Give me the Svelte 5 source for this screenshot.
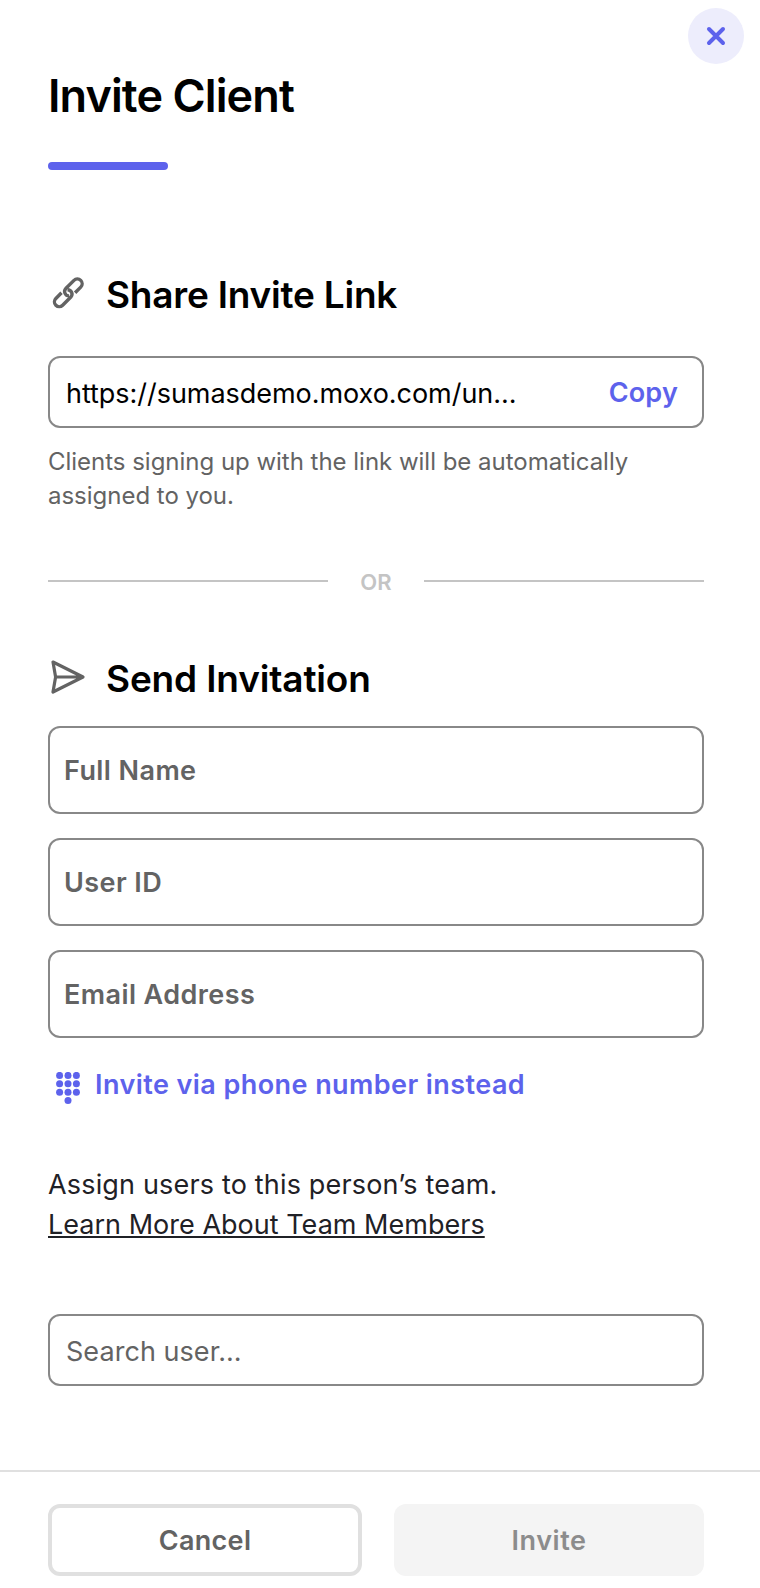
<script lang="ts">
  const inviteLink = 'https://sumasdemo.moxo.com/un...';

  const fields = [
    { id: 'name', label: 'Full Name' },
    { id: 'user', label: 'User ID' },
    { id: 'email', label: 'Email Address' },
  ];

  // keypad dots: 3x3 plus one below the middle column
  const dots = [
    [3.6, 3.4], [12, 3.4], [20.4, 3.4],
    [3.6, 11.8], [12, 11.8], [20.4, 11.8],
    [3.6, 20.2], [12, 20.2], [20.4, 20.2],
    [12, 28.6],
  ];
</script>

<div class="panel">
  <button class="close" aria-label="Close">
    <svg width="20" height="20" viewBox="0 0 20 20">
      <path d="M3 3 17 17M17 3 3 17" />
    </svg>
  </button>

  <header>
    <h1>Invite Client</h1>
    <div class="accent"></div>
  </header>

  <section class="share">
    <div class="heading">
      <svg class="icon link-icon" width="40" height="40" viewBox="0 0 40 40">
        <g transform="translate(20.3 21.8) rotate(-45)">
          <path d="M4.8 4.8H12.8a4.8 4.8 0 0 0 0-9.6H1.2a4.4 4.4 0 0 0-2.8 7.6" />
          <path d="M-4.8-4.8H-12.8a4.8 4.8 0 0 0 0 9.6H-1.2a4.4 4.4 0 0 0 2.8-7.6" />
        </g>
      </svg>
      <h2>Share Invite Link</h2>
    </div>
    <div class="box link-box">
      <span class="link">{inviteLink}</span>
      <button class="copy">Copy</button>
    </div>
    <p class="caption"><span>Clients signing up with the link will be automatically</span> assigned to you.</p>
  </section>

  <div class="divider"><span>OR</span></div>

  <section class="send">
    <div class="heading">
      <svg class="icon" width="40" height="40" viewBox="0 0 40 40">
        <path d="M5 7 35 22 5 37 7.6 22zM7.6 22H34" />
      </svg>
      <h2>Send Invitation</h2>
    </div>
    <div class="fields">
      {#each fields as field (field.id)}
        <div class="field">{field.label}</div>
      {/each}
    </div>
    <button class="phone">
      <svg width="24" height="33" viewBox="0 0 24 33">
        {#each dots as [x, y]}
          <circle cx={x} cy={y} r="3.5" />
        {/each}
      </svg>
      <span>Invite via phone number instead</span>
    </button>
  </section>

  <section class="team">
    <p class="assign">Assign users to this person’s team.</p>
    <a class="learn" href="#team">Learn More About Team Members</a>
    <div class="box search">Search user...</div>
  </section>

  <footer>
    <button class="btn cancel">Cancel</button>
    <button class="btn invite">Invite</button>
  </footer>
</div>

<style>
  :global(body) {
    background: #fff;
  }

  .panel {
    position: relative;
    box-sizing: border-box;
    width: 760px;
    height: 1588px;
    font-family: Inter, sans-serif;
    color: #000;
    overflow: hidden;
  }

  .panel * {
    box-sizing: border-box;
  }

  h1, h2, p {
    margin: 0;
  }

  button {
    padding: 0;
    border: 0;
    background: none;
    font: inherit;
  }

  header, section {
    padding: 0 56px 0 48px;
  }

  .close {
    position: absolute;
    top: 8px;
    right: 16px;
    display: flex;
    align-items: center;
    justify-content: center;
    width: 56px;
    height: 56px;
    border-radius: 50%;
    background: #ededfc;
  }

  .close path {
    fill: none;
    stroke: #5d62ec;
    stroke-width: 4;
    stroke-linecap: round;
  }

  header {
    padding-top: 68px;
  }

  h1 {
    font-size: 45px;
    line-height: 56px;
    font-weight: 600;
    letter-spacing: -0.9px;
  }

  .accent {
    width: 120px;
    height: 8px;
    margin-top: 38px;
    border-radius: 4px;
    background: #5d62ec;
  }

  .share {
    padding-top: 101px;
  }

  .heading {
    display: flex;
    height: 48px;
    gap: 18px;
  }

  .icon {
    flex: none;
    fill: none;
    stroke: #636363;
    stroke-width: 3.2;
    stroke-linejoin: round;
  }

  .link-icon {
    stroke-width: 3.4;
  }

  h2 {
    font-size: 37px;
    line-height: 48px;
    font-weight: 600;
    letter-spacing: -0.22px;
  }

  .send h2 {
    letter-spacing: -0.16px;
  }

  .box {
    display: flex;
    align-items: center;
    height: 72px;
    padding: 2px 24px 0 16px;
    border: 2px solid #888;
    border-radius: 12px;
    font-size: 27px;
  }

  .link-box {
    justify-content: space-between;
    margin-top: 37px;
  }

  .link {
    letter-spacing: -0.04px;
  }

  .copy {
    padding-bottom: 2px;
    font-weight: 600;
    letter-spacing: 0.2px;
    color: #5d62ec;
  }

  .caption {
    margin-top: 17px;
    font-size: 24px;
    line-height: 34px;
    color: #636363;
    letter-spacing: -0.02px;
  }

  .caption span {
    display: block;
  }

  .divider {
    display: flex;
    align-items: center;
    gap: 32px;
    height: 30px;
    margin-top: 53px;
    padding: 0 56px 0 48px;
  }

  .divider::before,
  .divider::after {
    content: '';
    flex: 1;
    height: 2px;
    background: #c4c4c4;
  }

  .divider span {
    width: 32px;
    padding-top: 2px;
    font-size: 22px;
    line-height: 28px;
    font-weight: 600;
    text-align: center;
    color: #c4c4c4;
  }

  .send {
    padding-top: 59px;
  }

  .fields {
    display: flex;
    flex-direction: column;
    gap: 24px;
    margin-top: 23px;
  }

  .field {
    display: flex;
    align-items: center;
    height: 88px;
    padding-left: 14px;
    border: 2px solid #888;
    border-radius: 12px;
    font-size: 27px;
    font-weight: 600;
    letter-spacing: 0.42px;
    color: #636363;
  }

  .phone {
    display: flex;
    align-items: flex-start;
    gap: 15px;
    height: 40px;
    margin: 26px 0 0 8px;
    font-size: 27px;
    line-height: 40px;
    font-weight: 600;
    letter-spacing: 0.43px;
    color: #5d62ec;
  }

  .phone svg {
    flex: none;
    margin-top: 8px;
    fill: #5d62ec;
  }

  .phone span {
    padding-top: 1px;
  }

  .team {
    padding-top: 61px;
    font-size: 27px;
    line-height: 40px;
    color: #1f2126;
  }

  .assign {
    letter-spacing: 0.17px;
  }

  .learn {
    display: block;
    color: inherit;
    letter-spacing: 0.02px;
    text-decoration: underline;
    text-decoration-thickness: 2px;
    text-decoration-skip-ink: none;
    text-underline-offset: 2px;
  }

  .search {
    margin-top: 69px;
    padding-top: 3px;
    color: #636363;
    letter-spacing: 0.05px;
  }

  footer {
    display: flex;
    gap: 32px;
    height: 118px;
    margin-top: 84px;
    padding: 32px 56px 12px 48px;
    border-top: 2px solid #e0e0e0;
  }

  .btn {
    height: 72px;
    border-radius: 12px;
    font-size: 27px;
    font-weight: 600;
  }

  .cancel {
    width: 314px;
    border: 4px solid #e0e0e0;
    color: #636363;
    letter-spacing: 0.33px;
  }

  .invite {
    width: 310px;
    background: #f4f4f4;
    color: #8c8c8c;
    letter-spacing: 0.54px;
  }
</style>
